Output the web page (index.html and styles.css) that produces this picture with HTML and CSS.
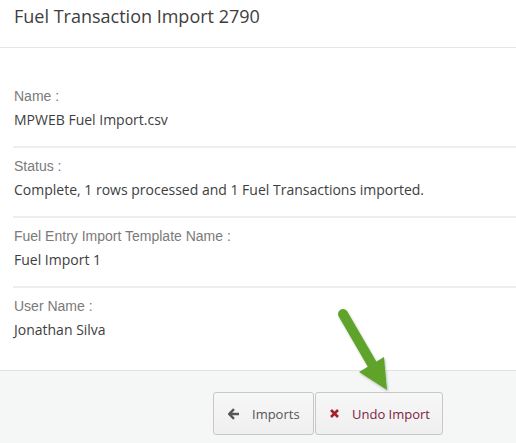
FILE: index.html
```
<!DOCTYPE html>
<html>
<head>
<meta charset="utf-8">
<link rel="stylesheet" href="styles.css">
</head>
<body>
<div class="page">
  <header class="header">
    <h1 class="title">Fuel Transaction Import 2790</h1>
  </header>
  <main class="details">
    <div class="row">
      <div class="label">Name :</div>
      <div class="value">MPWEB Fuel Import.csv</div>
    </div>
    <div class="row">
      <div class="label">Status :</div>
      <div class="value">Complete, 1 rows processed and 1 Fuel Transactions imported.</div>
    </div>
    <div class="row">
      <div class="label">Fuel Entry Import Template Name :</div>
      <div class="value">Fuel Import 1</div>
    </div>
    <div class="row last">
      <div class="label">User Name :</div>
      <div class="value">Jonathan Silva</div>
    </div>
  </main>
  <footer class="footer">
    <button class="btn">
      <svg class="icon" width="12" height="12" viewBox="0 0 12 12"><path d="M6 1.2 L1.3 6 L6 10.8 M1.6 6 H11" fill="none" stroke="#555" stroke-width="2.4" stroke-linejoin="miter"/></svg>
      <span>Imports</span>
    </button>
    <button class="btn undo">
      <svg class="icon x" width="9" height="9" viewBox="0 0 9 9"><path d="M1 1 L8 8 M8 1 L1 8" stroke="#a51f2e" stroke-width="2.6"/></svg>
      <span>Undo Import</span>
    </button>
  </footer>
  <svg class="pointer" width="516" height="443" viewBox="0 0 516 443">
    <defs>
      <filter id="sh" x="-20%" y="-20%" width="140%" height="140%">
        <feDropShadow dx="1" dy="1.5" stdDeviation="1.2" flood-color="#000" flood-opacity="0.25"/>
      </filter>
    </defs>
    <g filter="url(#sh)" fill="#5fa32a">
      <line x1="343" y1="314" x2="372" y2="364" stroke="#5fa32a" stroke-width="10" stroke-linecap="round"/>
      <polygon points="359,372 387,390 384,357"/>
    </g>
  </svg>
</div>
</body>
</html>
```
FILE: styles.css
```
html, body {
  margin: 0;
  padding: 0;
  background: #fff;
}
.page {
  position: relative;
  width: 516px;
  min-height: 443px;
  display: flex;
  flex-direction: column;
  font-family: "Open Sans", sans-serif;
  color: #333;
}
.header {
  padding: 6px 14px 21px;
  border-bottom: 1px solid #e5e5e5;
}
.title {
  margin: 0;
  font-size: 18px;
  line-height: 20px;
  font-weight: 400;
  color: #3e3e3e;
}
.details {
  padding: 30px 0 14px 13px;
}
.row {
  padding: 8px 0 16px 1px;
  border-bottom: 2px solid #eeeeee;
}
.row.last {
  border-bottom: none;
}
.label {
  font-family: "Liberation Sans", Arial, sans-serif;
  font-size: 14px;
  line-height: 20px;
  color: #7a7a7a;
  margin-bottom: 4px;
}
.value {
  font-size: 14px;
  line-height: 20px;
  color: #3e3e3e;
}
.footer {
  flex: 1;
  background: #f5f6f6;
  border-top: 1px solid #e2e2e2;
  padding: 21px 0 8px 213px;
  display: flex;
  align-items: flex-start;
  gap: 1px;
}
.btn {
  display: flex;
  align-items: center;
  height: 43px;
  box-sizing: border-box;
  border: 1px solid #c8c8c8;
  border-radius: 3px;
  background: linear-gradient(#f7f7f7, #efefef);
  font-family: "Open Sans", sans-serif;
  font-size: 13px;
  color: #555;
  padding: 0 13px 0 14px;
  width: 101px;
  white-space: nowrap;
}
.btn .icon {
  margin-right: 12px;
  flex: none;
}
.btn.undo {
  width: 128px;
  color: #7e2244;
}
.btn.undo .icon {
  margin-right: 13px;
}
.pointer {
  position: absolute;
  left: 0;
  top: 0;
  pointer-events: none;
}
```
